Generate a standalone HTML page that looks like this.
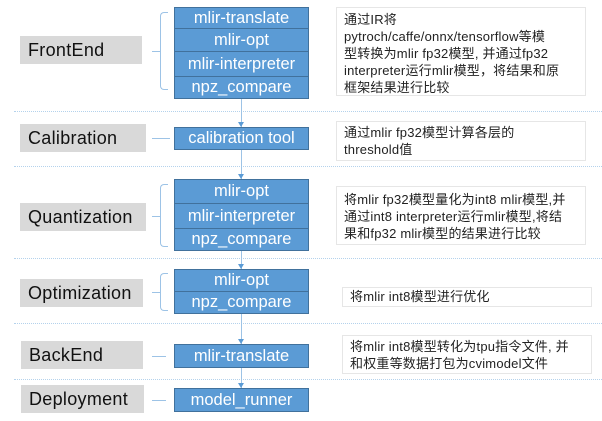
<!DOCTYPE html>
<html><head><meta charset="utf-8"><style>
body{margin:0;width:602px;height:421px;background:#fff;position:relative;overflow:hidden;font-family:"Liberation Sans","Noto Sans CJK SC",sans-serif}
div{position:absolute;box-sizing:border-box}
.lab{background:#d9d9d9;color:#111;font-size:18px;padding-left:8px;line-height:28px;height:28px;letter-spacing:0.3px}
.b{background:#5b9bd5;border:1px solid #41719c;color:#fff;font-size:16.5px;text-align:center;left:174px;width:135px;white-space:nowrap}
.d{border:1px solid #e6e6e6;color:#222;font-size:13px;line-height:17px;padding:3px 7px;white-space:nowrap;letter-spacing:0.2px}
.dot{left:14px;width:588px;height:0;border-top:1px dotted #b4d2ec}
.v{left:241px;width:0;border-left:1px solid #9dc3e6}
.ar{left:238px;width:0;height:0;border-left:3.5px solid transparent;border-right:3.5px solid transparent;border-top:5px solid #5b9bd5}
.br{width:8px;border:1px solid #9dc3e6;border-right:none;border-radius:4px 0 0 4px;left:160px}
.h{height:0;border-top:1px solid #9dc3e6}
</style></head><body>
<div class="dot" style="top:111px"></div>
<div class="dot" style="top:166px"></div>
<div class="dot" style="top:258px"></div>
<div class="dot" style="top:323px"></div>
<div class="dot" style="top:379px"></div>
<div class="v" style="top:98px;height:30px"></div><div class="ar" style="top:122px"></div>
<div class="v" style="top:149px;height:30px"></div><div class="ar" style="top:174px"></div>
<div class="v" style="top:251px;height:18px"></div><div class="ar" style="top:264px"></div>
<div class="v" style="top:313px;height:31px"></div><div class="ar" style="top:339px"></div>
<div class="v" style="top:367px;height:21px"></div><div class="ar" style="top:383px"></div>

<div class="lab" style="left:20px;top:36px;width:122px">FrontEnd</div>
<div class="lab" style="left:20px;top:124px;width:126px">Calibration</div>
<div class="lab" style="left:20px;top:203px;width:126px">Quantization</div>
<div class="lab" style="left:20px;top:279px;width:123px">Optimization</div>
<div class="lab" style="left:21px;top:341px;width:122px">BackEnd</div>
<div class="lab" style="left:21px;top:385px;width:123px">Deployment</div>

<div class="br" style="top:12px;height:78px"></div><div class="h" style="left:152px;top:51px;width:9px"></div>
<div class="h" style="left:152px;top:138px;width:18px"></div>
<div class="br" style="top:184px;height:63px"></div><div class="h" style="left:152px;top:216px;width:9px"></div>
<div class="br" style="top:273px;height:38px"></div><div class="h" style="left:152px;top:292px;width:9px"></div>
<div class="h" style="left:152px;top:356px;width:14px"></div>
<div class="h" style="left:152px;top:400px;width:14px"></div>

<div class="b" style="top:7px;height:22px;line-height:20px">mlir-translate</div>
<div class="b" style="top:28px;height:24px;line-height:22px">mlir-opt</div>
<div class="b" style="top:51px;height:26px;line-height:24px">mlir-interpreter</div>
<div class="b" style="top:76px;height:23px;line-height:21px">npz_compare</div>
<div class="b" style="top:127px;height:23px;line-height:21px">calibration tool</div>
<div class="b" style="top:179px;height:25px;line-height:23px">mlir-opt</div>
<div class="b" style="top:203px;height:26px;line-height:24px">mlir-interpreter</div>
<div class="b" style="top:228px;height:23px;line-height:21px">npz_compare</div>
<div class="b" style="top:269px;height:23px;line-height:21px">mlir-opt</div>
<div class="b" style="top:291px;height:23px;line-height:21px">npz_compare</div>
<div class="b" style="top:344px;height:24px;line-height:22px">mlir-translate</div>
<div class="b" style="top:388px;height:24px;line-height:22px">model_runner</div>

<div class="d" style="left:336px;top:7px;width:250px;height:89px">通过IR将<br>pytroch/caffe/onnx/tensorflow等模<br>型转换为mlir fp32模型, 并通过fp32<br>interpreter运行mlir模型，将结果和原<br>框架结果进行比较</div>
<div class="d" style="left:336px;top:121px;width:250px;height:40px;padding-top:2px">通过mlir fp32模型计算各层的<br>threshold值</div>
<div class="d" style="left:336px;top:186px;width:250px;height:59px;padding-top:4px">将mlir fp32模型量化为int8 mlir模型,并<br>通过int8 interpreter运行mlir模型,将结<br>果和fp32 mlir模型的结果进行比较</div>
<div class="d" style="left:342px;top:287px;width:250px;height:20px;line-height:14px;padding-top:2px">将mlir int8模型进行优化</div>
<div class="d" style="left:342px;top:335px;width:250px;height:39px;padding-top:2px">将mlir int8模型转化为tpu指令文件, 并<br>和权重等数据打包为cvimodel文件</div>
</body></html>
